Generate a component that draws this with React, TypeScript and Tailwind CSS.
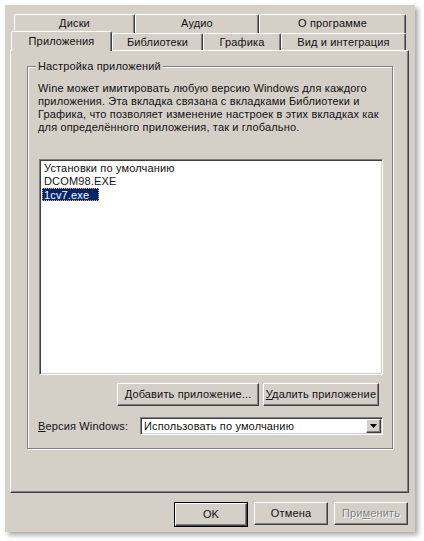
import * as React from "react"

const raised =
  "border border-t-white border-l-white border-r-[#404040] border-b-[#404040] shadow-[inset_-1px_-1px_0_#808080]"
const sunken =
  "border border-t-[#808080] border-l-[#808080] border-r-white border-b-white shadow-[inset_1px_1px_0_#404040,inset_-1px_-1px_0_#d4d0c8]"

function Tab({ label, width, selected = false }: { label: string; width: string; selected?: boolean }) {
  return (
    <div
      className={
        "relative flex justify-center rounded-t-[2px] border-t border-l border-r border-t-white border-l-white border-r-[#404040] bg-[#d4d0c8] shadow-[inset_-1px_0_0_#808080] " +
        width +
        (selected ? " z-10 -mt-[2px] h-[20px] pt-[3px]" : " h-full pt-[2px]")
      }
    >
      {label}
    </div>
  )
}

function Button({ children, className = "", disabled = false }: { children: React.ReactNode; className?: string; disabled?: boolean }) {
  return (
    <div
      className={
        "flex h-[23px] items-center justify-center bg-[#d4d0c8] " +
        raised +
        " " +
        className +
        (disabled ? " text-[#808080] [text-shadow:1px_1px_0_#fff]" : "")
      }
    >
      {children}
    </div>
  )
}

export default function App() {
  return (
    <div
      className="h-[541px] w-[424px] bg-white pl-[5px] pt-[5px] text-[11px] leading-[13px] tracking-[0.15px] text-[#111]"
      style={{ fontFamily: '"Liberation Sans", Arial, sans-serif' }}
    >
      <div className="flex h-[527px] w-[410px] flex-col bg-[#d4d0c8] pl-[5px] pt-[9px] shadow-[3px_3px_5px_rgba(0,0,0,0.35)]">
        {/* Back row of tabs */}
        <div className="ml-[4px] flex h-[19px]">
          <Tab label="Диски" width="w-[121px]" />
          <Tab label="Аудио" width="w-[124px]" />
          <Tab label="О программе" width="w-[147px]" />
        </div>

        {/* Front row of tabs */}
        <div className="ml-[1px] flex h-[17px]">
          <Tab label="Приложения" width="w-[101px]" selected />
          <Tab label="Библиотеки" width="w-[91px]" />
          <Tab label="Графика" width="w-[78px]" />
          <Tab label="Вид и интеграция" width="w-[125px]" />
        </div>

        {/* Tab panel */}
        <div className="h-[443px] w-[399px] border border-t-white border-l-white border-r-[#404040] border-b-[#404040] pl-[16px] pt-[15px] shadow-[inset_-1px_-1px_0_#808080]">
          <div className="relative h-[383px] w-[366px] border border-[#808080] shadow-[inset_1px_1px_0_#fff,1px_1px_0_#fff]">
            <span className="absolute -top-[7px] left-[8px] bg-[#d4d0c8] px-[2px]">Настройка приложений</span>

            <p className="pl-[10px] pt-[15px] whitespace-nowrap">
              Wine может имитировать любую версию Windows для каждого
              <br />
              приложения. Эта вкладка связана с вкладками Библиотеки и
              <br />
              Графика, что позволяет изменение настроек в этих вкладках как
              <br />
              для определённого приложения, так и глобально.
            </p>

            {/* App list */}
            <div className={"ml-[11px] mt-[25px] h-[216px] w-[344px] bg-white p-[2px] " + sunken}>
              <div className="h-[13px] pl-[2px]">Установки по умолчанию</div>
              <div className="h-[13px] pl-[2px]">DCOM98.EXE</div>
              <div className="h-[13px] w-[57px] border border-dotted border-[#e0c060] bg-[#0a246a] pl-[1px] text-white">
                1cv7.exe
              </div>
            </div>

            <div className="mt-[8px] flex justify-end gap-[4px] pr-[13px]">
              <Button className="w-[142px]">
                <span>
                  <u>Д</u>обавить приложение...
                </span>
              </Button>
              <Button className="w-[116px]">
                <span>
                  <u>У</u>далить приложение
                </span>
              </Button>
            </div>

            <div className="mt-[11px] flex items-center pl-[10px]">
              <span className="w-[102px]">
                <u>В</u>ерсия Windows:
              </span>
              <div className={"flex h-[18px] w-[243px] items-center bg-white pl-[3px] " + sunken}>
                <span className="flex-1">Использовать по умолчанию</span>
                <div className={"mr-[1px] flex h-[14px] w-[15px] items-center justify-center bg-[#d4d0c8] " + raised}>
                  <svg width="7" height="4" viewBox="0 0 7 4">
                    <path d="M0 0h7L3.5 4z" fill="#000" />
                  </svg>
                </div>
              </div>
            </div>
          </div>
        </div>

        {/* Dialog buttons */}
        <div className="mt-[9px] flex justify-end gap-[6px] pr-[7px]">
          <div className="border border-black">
            <Button className="w-[72px] h-[21px]">OK</Button>
          </div>
          <Button className="w-[74px]">Отмена</Button>
          <Button className="w-[74px]" disabled>
            <span>
              При<u>м</u>енить
            </span>
          </Button>
        </div>
      </div>
    </div>
  )
}
